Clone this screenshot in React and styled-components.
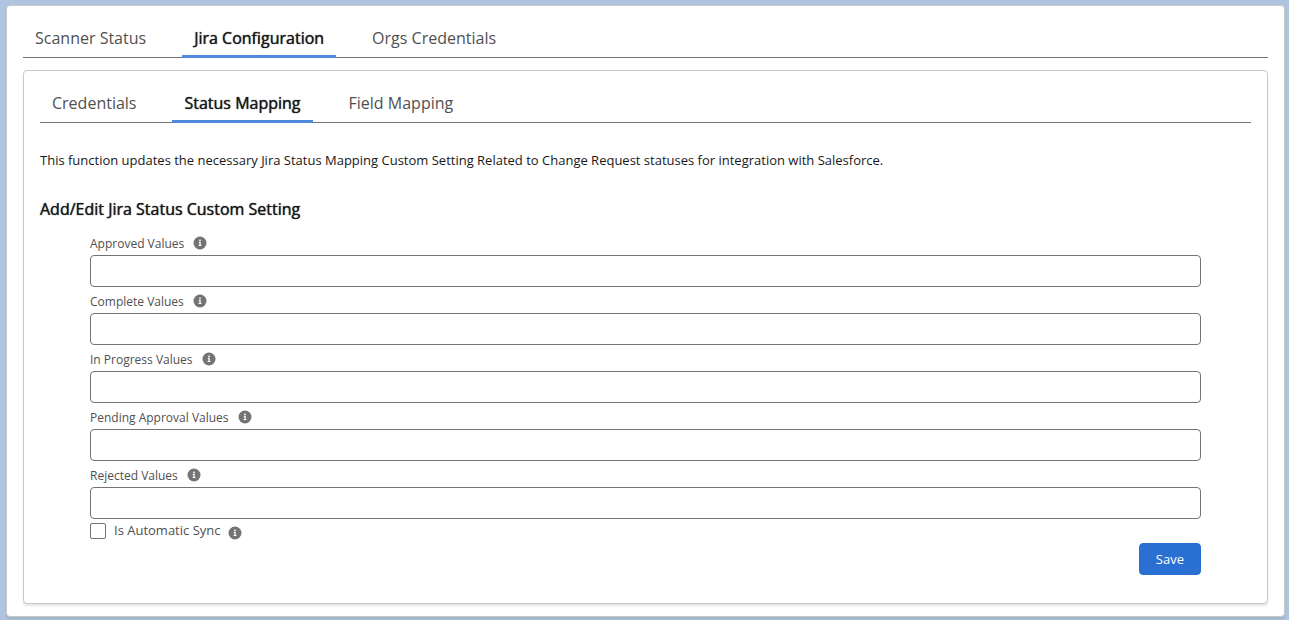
import React, { useState } from "react";
import styled, { createGlobalStyle, css } from "styled-components";

const GlobalStyle = createGlobalStyle`
  * {
    box-sizing: border-box;
  }

  body {
    margin: 0;
    background: #b0c4df;
    color: #181818;
    font-family: "Open Sans", "Noto Sans", sans-serif;
    font-size: 13px;
    line-height: 20px;
  }

  button,
  input {
    font: inherit;
  }
`;

const Page = styled.main`
  padding: 5px 4px 3px 6px;
`;

const Card = styled.section`
  padding: 12px 16px;
  background: #fff;
  border: 1px solid #c9c9c9;
  border-radius: 4px;
  box-shadow: 0 2px 2px rgba(0, 0, 0, 0.1);
`;

const Panel = styled(Card)`
  margin-top: 12px;
  padding-bottom: 28px;
`;

const strongText = css`
  color: #181818;
  text-shadow: 0 0 1px #181818;
`;

const TabList = styled.div`
  display: flex;
  gap: 24px;
  border-bottom: 1px solid #747474;
`;

const Tab = styled.button`
  height: 40px;
  margin-bottom: -1px;
  padding: 0 12px;
  border: 0;
  background: none;
  color: #505050;
  font-size: 16px;
  line-height: 40px;
  cursor: pointer;

  ${({ $active }) =>
    $active &&
    css`
      ${strongText}
      box-shadow: inset 0 -3px #5289e0;
    `}
`;

const Description = styled.p`
  margin: 27px 0 0;
`;

const Heading = styled.h2`
  margin: 27px 0 8px;
  font-size: 16px;
  font-weight: 400;
  line-height: 24px;
  ${strongText}
`;

const Form = styled.form`
  padding: 0 50px;
`;

const LabelRow = styled.div`
  display: flex;
  align-items: center;
  gap: 9px;
  height: 26px;
  padding-top: 2px;
  color: #505050;
  font-size: 12px;
`;

const FieldLabel = styled.label`
  padding-top: 2px;
`;

const TextInput = styled.input`
  display: block;
  width: 100%;
  height: 32px;
  padding: 0 12px;
  border: 1px solid #747474;
  border-radius: 4px;
  background: #fff;
`;

const CheckRow = styled.div`
  display: flex;
  align-items: center;
  gap: 8px;
  height: 24px;
  color: #505050;
`;

const CheckLabel = styled.label`
  padding-bottom: 2px;
`;

const Checkbox = styled.input`
  appearance: none;
  width: 16px;
  height: 16px;
  margin: 0;
  border: 1px solid #747474;
  border-radius: 2px;
  background: #fff;

  &:checked {
    background: #2a70d2;
    box-shadow: inset 0 0 0 3px #fff;
  }
`;

const InfoButton = styled.button`
  display: flex;
  padding: 0;
  border: 0;
  background: none;
  color: #747474;
  cursor: help;

  ${CheckRow} & {
    padding-top: 4px;
  }
`;

const Actions = styled.div`
  display: flex;
  justify-content: flex-end;
`;

const SaveButton = styled.button`
  height: 32px;
  padding: 0 16px;
  border: 1px solid #2a70d2;
  border-radius: 4px;
  background: #2a70d2;
  color: #fff;
  cursor: pointer;
`;

const mainTabs = ["Scanner Status", "Jira Configuration", "Orgs Credentials"];
const jiraTabs = ["Credentials", "Status Mapping", "Field Mapping"];

const fields = [
  { id: "approved", label: "Approved Values" },
  { id: "complete", label: "Complete Values" },
  { id: "inProgress", label: "In Progress Values" },
  { id: "pendingApproval", label: "Pending Approval Values" },
  { id: "rejected", label: "Rejected Values" },
];

function Tabs({ items, initial }) {
  const [active, setActive] = useState(initial);

  return (
    <TabList role="tablist">
      {items.map((item) => (
        <Tab
          key={item}
          type="button"
          role="tab"
          aria-selected={item === active}
          $active={item === active}
          onClick={() => setActive(item)}
        >
          {item}
        </Tab>
      ))}
    </TabList>
  );
}

function Info() {
  return (
    <InfoButton type="button" aria-label="Help">
      <svg width="14" height="14" viewBox="0 0 14 14" aria-hidden="true">
        <circle cx="7" cy="7" r="6.5" fill="currentColor" />
        <circle cx="7" cy="4.5" r="0.9" fill="#fff" />
        <path d="M5.8 6.1h1.9v2.9h.7v.9H5.6V9h.8V7h-.6z" fill="#fff" />
      </svg>
    </InfoButton>
  );
}

function StatusMappingForm() {
  return (
    <Form onSubmit={(e) => e.preventDefault()}>
      {fields.map(({ id, label }) => (
        <div key={id}>
          <LabelRow>
            <FieldLabel htmlFor={id}>{label}</FieldLabel>
            <Info />
          </LabelRow>
          <TextInput id={id} name={id} type="text" />
        </div>
      ))}
      <CheckRow>
        <Checkbox id="automaticSync" type="checkbox" />
        <CheckLabel htmlFor="automaticSync">Is Automatic Sync</CheckLabel>
        <Info />
      </CheckRow>
      <Actions>
        <SaveButton type="submit">Save</SaveButton>
      </Actions>
    </Form>
  );
}

function App() {
  return (
    <>
      <GlobalStyle />
      <Page>
        <Card>
          <Tabs items={mainTabs} initial="Jira Configuration" />
          <Panel>
            <Tabs items={jiraTabs} initial="Status Mapping" />
            <Description>
              This function updates the necessary Jira Status Mapping Custom
              Setting Related to Change Request statuses for integration with
              Salesforce.
            </Description>
            <Heading>Add/Edit Jira Status Custom Setting</Heading>
            <StatusMappingForm />
          </Panel>
        </Card>
      </Page>
    </>
  );
}

export default App;
